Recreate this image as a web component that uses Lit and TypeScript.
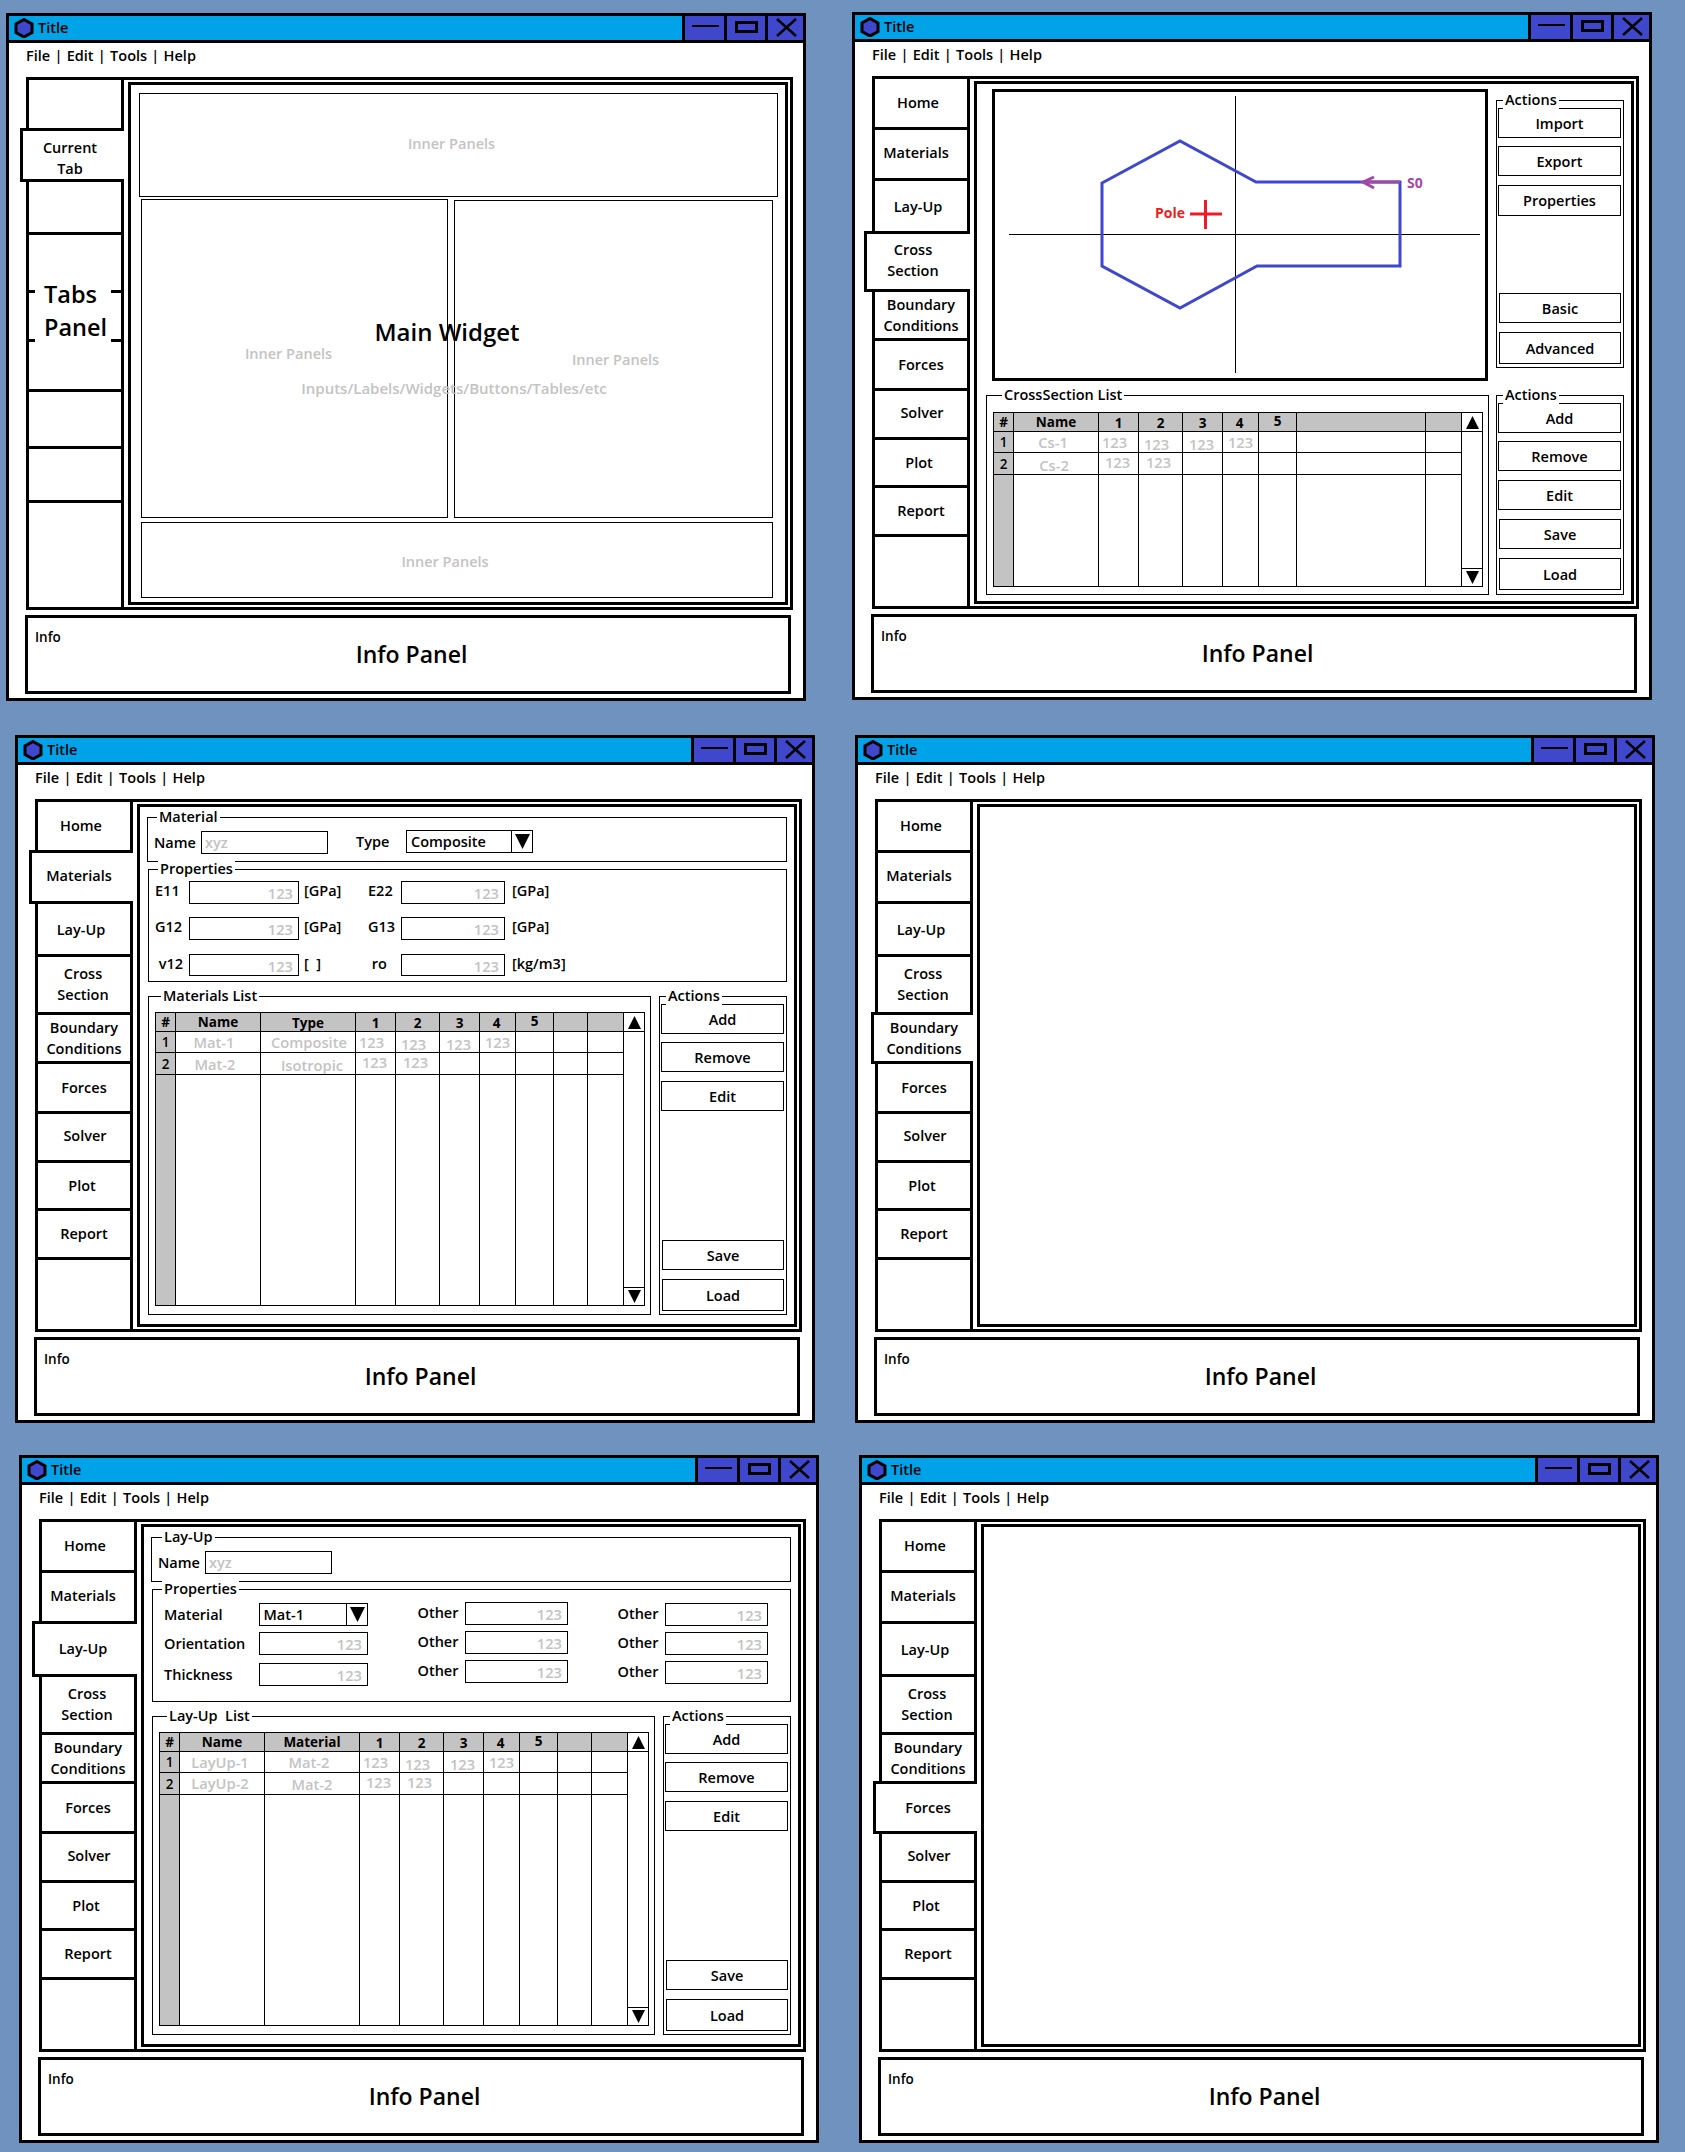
import { LitElement, html, css, svg, nothing } from "lit";
import { customElement } from "lit/decorators.js";

type Cell = string | [string, number, number];
type Tab = { label: string[]; dx: number; dy: number; sdx?: number; sdy?: number };

const TABS: Tab[] = [
  { label: ["Home"], dx: -3, dy: -1 },
  { label: ["Materials"], dx: -5, dy: -2 },
  { label: ["Lay-Up"], dx: -3, dy: 0, sdx: -5, sdy: -1 },
  { label: ["Cross", "Section"], dx: -1, dy: -1, sdx: -8, sdy: -2 },
  { label: ["Boundary", "Conditions"], dx: 0, dy: 0 },
  { label: ["Forces"], dx: 0, dy: 0 },
  { label: ["Solver"], dx: 1, dy: -2 },
  { label: ["Plot"], dx: -2, dy: 0 },
  { label: ["Report"], dx: 0, dy: -1 },
];
const TAB_H = [51, 51, 53, 58, 49, 50, 49, 48, 49];
const WIRE_H = [51, 51, 53, 58, 49, 50, 57, 54];

const WINDOWS = [
  { x: 6, y: 13, view: "wire", sel: 1, selLeft: 14 },
  { x: 852, y: 12, view: "cross", sel: 3, selLeft: 12 },
  { x: 15, y: 735, view: "material", sel: 1, selLeft: 14 },
  { x: 855, y: 735, view: "empty", sel: 4, selLeft: 16 },
  { x: 19, y: 1455, view: "layup", sel: 2, selLeft: 13 },
  { x: 859, y: 1455, view: "empty", sel: 5, selLeft: 14 },
];

const N1: Cell[] = [["123", -4, 0], ["123", -4, 2], ["123", -1, 2], ["123", 0, 0]];
const N2: Cell[] = [["123", -1, -2], ["123", -2, -2]];

@customElement("app-root")
export class AppRoot extends LitElement {
  static styles = css`
    :host { display: block; font-family: "Open Sans", "Liberation Sans", sans-serif; font-weight: 600; font-size: 14.5px; color: #000; }
    * { box-sizing: border-box; }
    .desk { position: relative; width: 1685px; height: 2152px; background: #7092be; overflow: hidden; }
    .win { position: absolute; width: 800px; height: 688px; border: 3px solid #000; background: #fff; }

    .titlebar { display: flex; align-items: center; height: 27px; background: #00a2e8; border-bottom: 3px solid #000; }
    .logo { width: 20px; height: 20px; margin-left: 5px; flex: none; }
    .title { margin-left: 4px; flex: 1; font-size: 14.5px; line-height: 20px; margin-top: -1px; }
    .tb { flex: none; height: 24px; background: #3f48cc; border-left: 3px solid #000; }
    .tb svg { display: block; width: 100%; height: 100%; }
    .tb.a { width: 42px; } .tb.b { width: 41px; } .tb.c { width: 38px; }
    .menu { height: 34px; padding: 3px 0 0 17px; font-size: 14.5px; line-height: 20px; word-spacing: 0.5px; white-space: pre; }

    .frame { display: flex; width: 767px; height: 533px; margin-left: 17px; border: 3px solid #000; }
    .tabs { position: relative; display: flex; flex-direction: column; width: 95px; flex: none; }
    .tab { position: relative; display: flex; flex-direction: column; align-items: center; justify-content: center; flex: none; border-right: 3px solid #000; border-bottom: 3px solid #000; line-height: 21px; font-size: 14.5px; }
    .tab.last { flex: 1; border-bottom: 0; }
    .tab.sel { z-index: 1; margin-top: -3px; border: 3px solid #000; border-right: 0; background: #fff; }
    .tab span { display: block; white-space: nowrap; }
    .tabs-label { position: absolute; left: 6px; top: 198px; width: 76px; height: 72px; z-index: 2; padding-left: 9px; background: #fff; font-size: 23.5px; line-height: 33px; }
    .tabs-label span { display: block; }
    .main { position: relative; flex: 1; margin: 2px 2px 2px 4px; border: 3px solid #000; }

    .info { width: 766px; height: 79px; margin: 5px 0 0 16px; padding: 10px 0 0 7px; border: 3px solid #000; }
    .info .small { font-size: 13.5px; line-height: 18px; }
    .info .big { margin-top: -7px; text-align: center; font-size: 23px; line-height: 30px; }

    .wire { padding: 8px 0 0 8px; }
    .ph { display: flex; align-items: center; justify-content: center; border: 1px solid #000; color: #c3c3c3; font-size: 14.5px; }
    .ph1 { width: 639px; height: 104px; padding: 0 14px 3px 0; }
    .wire-row { display: flex; gap: 6px; margin: 2px 0 0 2px; }
    .ph2 { width: 307px; height: 319px; padding: 0 12px 10px 0; }
    .ph3 { width: 319px; height: 318px; margin-top: 1px; padding-left: 4px; }
    .ph4 { width: 632px; height: 76px; margin: 4px 0 0 2px; padding: 2px 24px 0 0; }
    .float { position: absolute; transform: translate(-50%, -50%); white-space: nowrap; }
    .mw { left: 316px; top: 246px; font-size: 24px; }
    .iw { left: 323px; top: 303px; color: #c3c3c3; font-size: 15px; }

    .group { position: relative; border: 1px solid #000; }
    .legend { position: absolute; top: -10px; padding: 0 2px; background: #fff; font-size: 14.5px; line-height: 18px; white-space: pre; }
    .stack { display: flex; flex-direction: column; padding-left: 1px; }
    .btn { display: flex; align-items: center; justify-content: center; width: 123px; height: 30px; flex: none; border: 1px solid #000; }
    .m8 { margin-top: 8px; } .m9 { margin-top: 9px; }
    .tall { height: 32px; } .mid { height: 31px; } .shift { margin-left: 1px; width: 122px; }
    .push { margin-top: auto; }

    .cross-top { display: flex; align-items: flex-start; padding: 5px 0 0 15px; }
    .canvas { width: 496px; height: 292px; flex: none; border: 3px solid #000; }
    .canvas svg { display: block; width: 490px; height: 286px; }
    .cross-actions { width: 128px; height: 268px; margin: 11px 0 0 8px; padding-top: 7px; padding-bottom: 3px; }
    .cross-bottom { display: flex; margin: 14px 0 0 9px; height: 200px; }
    .list { width: 503px; flex: none; }
    .list.cs { padding: 16px 0 0 6px; }
    .list.ml { padding: 15px 0 0 6px; }
    .row-actions { width: 128px; margin-left: 7px; padding-top: 7px; padding-bottom: 3px; }
    .row-actions.mx { margin-left: 8px; }

    .table { display: grid; width: 490px; border: 1px solid #000; font-size: 14.7px; grid-template-rows: 19px 21px 22px 1fr; }
    .table.short { height: 175px; }
    .table.long { height: 294px; }
    .cell { display: flex; align-items: center; justify-content: center; border-right: 1px solid #000; border-bottom: 1px solid #000; color: #c3c3c3; min-width: 0; overflow: hidden; white-space: nowrap; }
    .cell span { display: inline-block; }
    .cell.hd, .cell.idx { background: #c3c3c3; color: #000; font-size: 13.5px; }
    .cell.hd { font-weight: 700; }
    .cell.fill { border-bottom: 0; }
    .scroll-up { display: flex; align-items: center; justify-content: center; border-bottom: 1px solid #000; }
    .scroll-track { display: flex; align-items: flex-end; grid-row: 2 / 5; }
    .scroll-down { display: flex; align-items: center; justify-content: center; width: 100%; height: 18px; border-top: 1px solid #000; }
    .tri { display: block; width: 13px; height: 13px; }

    .form { padding: 10px 0 0 7px; }
    .g-top { width: 640px; height: 45px; }
    .g-props { width: 639px; height: 113px; margin: 7px 0 0 1px; }
    .g-list-row { display: flex; height: 319px; margin: 14px 0 0 1px; }
    .name-row { display: flex; align-items: flex-start; padding: 13px 0 0 6px; }
    .lbl { flex: none; white-space: nowrap; line-height: 23px; }
    .box { display: flex; align-items: center; height: 23px; border: 1px solid #000; color: #c3c3c3; flex: none; }
    .box.name { width: 127px; padding-left: 3px; }
    .box.num { justify-content: flex-end; padding: 1px 5px 0 0; font-size: 14.7px; }
    .combo { display: flex; align-items: center; height: 23px; border: 1px solid #000; flex: none; padding-left: 4px; }
    .combo .val { flex: 1; }
    .combo .arrow { display: flex; align-items: center; justify-content: center; align-self: stretch; width: 21px; border-left: 1px solid #000; }
    .combo .tri { width: 15px; height: 15px; }
    .c-type { width: 127px; margin-top: -1px; }
    .type-lbl { width: 50px; margin: -1px 0 0 28px; }
    .name-lbl { width: 47px; }

    .mprops { display: grid; grid-template-columns: 34px 110px 69px 33px 104px 1fr; grid-template-rows: 36px 37px 22px; margin: 11px 0 0 6px; }
    .mprops > * { height: 23px; }
    .mprops .short { height: 22px; }
    .mprops .lbl { line-height: 20px; }
    .unit { padding-left: 5px; line-height: 20px; white-space: pre; }
    .unit.u2 { padding-left: 7px; }

    .lprops { display: flex; align-items: flex-start; }
    .lcol { display: grid; row-gap: 6px; flex: none; grid-auto-rows: 23px; }
    .lcol1 { grid-template-columns: 94.5px 109.5px; margin: 13px 0 0 11px; }
    .lcol1 .r3 { margin-top: 2px; }
    .lcol2 { grid-template-columns: 47px 103.5px; margin: 12px 0 0 49.5px; }
    .lcol3 { grid-template-columns: 47px 103.5px; margin: 13px 0 0 49.5px; }
    .lcol2 .lbl, .lcol3 .lbl { line-height: 21px; }

    svg text { font-family: "Open Sans", "Liberation Sans", sans-serif; font-weight: 700; font-size: 14px; }
    .pole { fill: #ed1c24; }
    .s0 { fill: #a349a4; }
  `;

  private tri(up: boolean) {
    return html`<svg class="tri" viewBox="0 0 13 13"><polygon points=${up ? "6.5,0 13,13 0,13" : "0,0 13,0 6.5,13"} fill="#000"></polygon></svg>`;
  }

  private table(cls: string, cols: number[], head: Cell[], rows: Cell[][]) {
    const body = cols.length - 1;
    const text = (c: Cell) =>
      typeof c === "string"
        ? html`<span>${c}</span>`
        : html`<span style="transform:translate(${c[1]}px,${c[2]}px)">${c[0]}</span>`;
    const pad = (r: Cell[]) => [...r, ...Array(Math.max(0, body - r.length)).fill("")] as Cell[];
    return html`
      <div class="table ${cls}" style="grid-template-columns:${cols.map((c) => c + "px").join(" ")}">
        ${pad(head).map((c) => html`<div class="cell hd">${text(c)}</div>`)}
        <div class="scroll-up">${this.tri(true)}</div>
        ${rows.map((r, ri) =>
          pad(r).map((c, i) => html`<div class="cell ${i === 0 ? "idx" : ""}" style="grid-row:${ri + 2};grid-column:${i + 1}">${text(c)}</div>`)
        )}
        ${pad([]).map((_, i) => html`<div class="cell fill ${i === 0 ? "idx" : ""}" style="grid-row:4;grid-column:${i + 1}"></div>`)}
        <div class="scroll-track" style="grid-column:${cols.length}"><div class="scroll-down">${this.tri(false)}</div></div>
      </div>`;
  }

  private buttons(names: [string, string][]) {
    return names.map(([n, c]) => html`<div class="btn ${c}">${n}</div>`);
  }

  private wire() {
    return html`
      <div class="main wire">
        <div class="ph ph1">Inner Panels</div>
        <div class="wire-row">
          <div class="ph ph2">Inner Panels</div>
          <div class="ph ph3">Inner Panels</div>
        </div>
        <div class="ph ph4">Inner Panels</div>
        <div class="float mw">Main Widget</div>
        <div class="float iw">Inputs/Labels/Widgets/Buttons/Tables/etc</div>
      </div>`;
  }

  private cross() {
    return html`
      <div class="main">
        <div class="cross-top">
          <div class="canvas">
            <svg viewBox="0 0 490 286">
              <line x1="240.5" y1="4" x2="240.5" y2="281" stroke="#000"></line>
              <line x1="14" y1="142.5" x2="485" y2="142.5" stroke="#000"></line>
              <polygon points="107,91 185,49 261,90 405,90 405,174 262,174 185,216 107,174" fill="none" stroke="#3f48cc" stroke-width="3"></polygon>
              <path d="M405 90H368M379 85L368 90L379 96" fill="none" stroke="#a349a4" stroke-width="3"></path>
              <text class="s0" x="412" y="96">S0</text>
              <path d="M195 122H227M210.5 108V137" fill="none" stroke="#ed1c24" stroke-width="3"></path>
              <text class="pole" x="160" y="126">Pole</text>
            </svg>
          </div>
          <div class="group stack cross-actions">
            <span class="legend" style="left:6px">Actions</span>
            ${this.buttons([["Import", ""], ["Export", "m8"], ["Properties", "m9 mid"], ["Basic", "push shift"], ["Advanced", "m9 tall shift"]])}
          </div>
        </div>
        <div class="cross-bottom">
          <div class="group list cs">
            <span class="legend" style="left:15px">CrossSection List</span>
            ${this.table("short", [20, 85, 40, 44, 40, 36, 38, 129, 36, 20],
              ["#", "Name", ["1", 0, 1], ["2", 0, 1], ["3", 0, 1], ["4", -1, 1], ["5", 0, -1]],
              [["1", ["Cs-1", -3, 0], ...N1], ["2", ["Cs-2", -2, 1], ...N2]])}
          </div>
          <div class="group stack row-actions">
            <span class="legend" style="left:6px">Actions</span>
            ${this.buttons([["Add", ""], ["Remove", "m8"], ["Edit", "m9"], ["Save", "m9 shift"], ["Load", "m9 tall shift"]])}
          </div>
        </div>
      </div>`;
  }

  private listRow(legend: string, left: number, head: Cell[], r1: Cell[], r2: Cell[]) {
    return html`
      <div class="g-list-row">
        <div class="group list ml">
          <span class="legend" style="left:${left}px">${legend}</span>
          ${this.table("long", [20, 85, 95, 40, 44, 40, 36, 38, 34, 36, 20], head, [r1, r2])}
        </div>
        <div class="group stack row-actions mx">
          <span class="legend" style="left:6px">Actions</span>
          ${this.buttons([["Add", ""], ["Remove", "m8"], ["Edit", "m9"], ["Save", "push shift"], ["Load", "m9 tall shift"]])}
        </div>
      </div>`;
  }

  private numHead(second: Cell): Cell[] {
    return ["#", "Name", second, ["1", 0, 1], ["2", 0, 1], ["3", 0, 1], ["4", -1, 1], ["5", 0, -1]];
  }

  private num(w?: string) {
    return html`<div class="box num ${w ?? ""}">123</div>`;
  }

  private material() {
    return html`
      <div class="main form">
        <div class="group g-top">
          <span class="legend" style="left:9px">Material</span>
          <div class="name-row">
            <span class="lbl name-lbl">Name</span>
            <div class="box name">xyz</div>
            <span class="lbl type-lbl">Type</span>
            <div class="combo c-type"><span class="val">Composite</span><span class="arrow">${this.tri(false)}</span></div>
          </div>
        </div>
        <div class="group g-props">
          <span class="legend" style="left:9px">Properties</span>
          <div class="mprops">
            <span class="lbl">E11</span>${this.num()}<span class="unit">[GPa]</span>
            <span class="lbl">E22</span>${this.num()}<span class="unit u2">[GPa]</span>
            <span class="lbl">G12</span>${this.num()}<span class="unit">[GPa]</span>
            <span class="lbl">G13</span>${this.num()}<span class="unit u2">[GPa]</span>
            <span class="lbl">&nbsp;v12</span>${this.num("short")}<span class="unit">[  ]</span>
            <span class="lbl">&nbsp;ro</span>${this.num("short")}<span class="unit u2">[kg/m3]</span>
          </div>
        </div>
        ${this.listRow("Materials List", 12, this.numHead(["Type", 0, 1]),
          ["1", ["Mat-1", -4, 0], ["Composite", 1, 0], ...N1],
          ["2", ["Mat-2", -3, 0], ["Isotropic", 4, 1], ...N2])}
      </div>`;
  }

  private other(n: number) {
    return Array.from({ length: n }, () => html`<span class="lbl">Other</span>${this.num()}`);
  }

  private layup() {
    return html`
      <div class="main form">
        <div class="group g-top">
          <span class="legend" style="left:10px">Lay-Up</span>
          <div class="name-row">
            <span class="lbl name-lbl">Name</span>
            <div class="box name">xyz</div>
          </div>
        </div>
        <div class="group g-props">
          <span class="legend" style="left:9px">Properties</span>
          <div class="lprops">
            <div class="lcol lcol1">
              <span class="lbl">Material</span>
              <div class="combo"><span class="val">Mat-1</span><span class="arrow">${this.tri(false)}</span></div>
              <span class="lbl">Orientation</span>${this.num()}
              <span class="lbl r3">Thickness</span><div class="box num r3">123</div>
            </div>
            <div class="lcol lcol2">${this.other(3)}</div>
            <div class="lcol lcol3">${this.other(3)}</div>
          </div>
        </div>
        ${this.listRow("Lay-Up  List", 14, this.numHead("Material"),
          ["1", ["LayUp-1", -2, 0], ["Mat-2", -3, 0], ...N1],
          ["2", ["LayUp-2", -2, -1], ["Mat-2", 0, 0], ...N2])}
      </div>`;
  }

  private view(v: string) {
    switch (v) {
      case "wire": return this.wire();
      case "cross": return this.cross();
      case "material": return this.material();
      case "layup": return this.layup();
      default: return html`<div class="main"></div>`;
    }
  }

  private tabs(w: (typeof WINDOWS)[number]) {
    const wire = w.view === "wire";
    const heights = wire ? WIRE_H : TAB_H;
    const off = 23 - w.selLeft;
    const tabStyle = (i: number) => {
      const base = `height:${heights[i] + (i === w.sel ? 3 : 0)}px;`;
      const sel = i === w.sel ? `margin-left:-${off}px;width:${95 + off}px;padding-left:${off - 3}px;padding-right:3px;` : "";
      return base + sel;
    };
    const labels = (t: Tab | null, selected: boolean) => {
      if (!t) return nothing;
      const dx = selected && t.sdx !== undefined ? t.sdx : t.dx;
      const dy = selected && t.sdy !== undefined ? t.sdy : t.dy;
      return t.label.map((l) => html`<span style="transform:translate(${dx}px,${dy}px)">${l}</span>`);
    };
    const items: (Tab | null)[] = wire
      ? heights.map((_, i) => (i === 1 ? { label: ["Current", "Tab"], dx: -5, dy: 3 } : null))
      : TABS;
    return html`
      <div class="tabs">
        ${items.map((t, i) => html`<div class="tab ${i === w.sel ? "sel" : ""}" style=${tabStyle(i)}>${labels(t, i === w.sel)}</div>`)}
        <div class="tab last"></div>
        ${wire ? html`<div class="tabs-label"><span>Tabs</span><span>Panel</span></div>` : nothing}
      </div>`;
  }

  private windowFrame(w: (typeof WINDOWS)[number]) {
    return html`
      <section class="win" style="left:${w.x}px;top:${w.y}px">
        <div class="titlebar">
          <svg class="logo" viewBox="0 0 20 20"><polygon points="10,1.5 18,6 18,14.5 10,19 2,14.5 2,6" fill="#3f48cc" stroke="#000" stroke-width="3"></polygon></svg>
          <span class="title">Title</span>
          <div class="tb a"><svg viewBox="0 0 39 24"><line x1="7" y1="10" x2="34" y2="10" stroke="#000" stroke-width="2"></line></svg></div>
          <div class="tb b"><svg viewBox="0 0 38 24"><rect x="9.5" y="6.5" width="20" height="9" fill="none" stroke="#000" stroke-width="3"></rect></svg></div>
          <div class="tb c"><svg viewBox="0 0 35 24">${svg`<path d="M9 3L28 20M28 3L9 20" fill="none" stroke="#000" stroke-width="2.5"></path>`}</svg></div>
        </div>
        <div class="menu">File | Edit | Tools | Help</div>
        <div class="frame">${this.tabs(w)}${this.view(w.view)}</div>
        <div class="info"><div class="small">Info</div><div class="big">Info Panel</div></div>
      </section>`;
  }

  render() {
    return html`<div class="desk">${WINDOWS.map((w) => this.windowFrame(w))}</div>`;
  }
}
